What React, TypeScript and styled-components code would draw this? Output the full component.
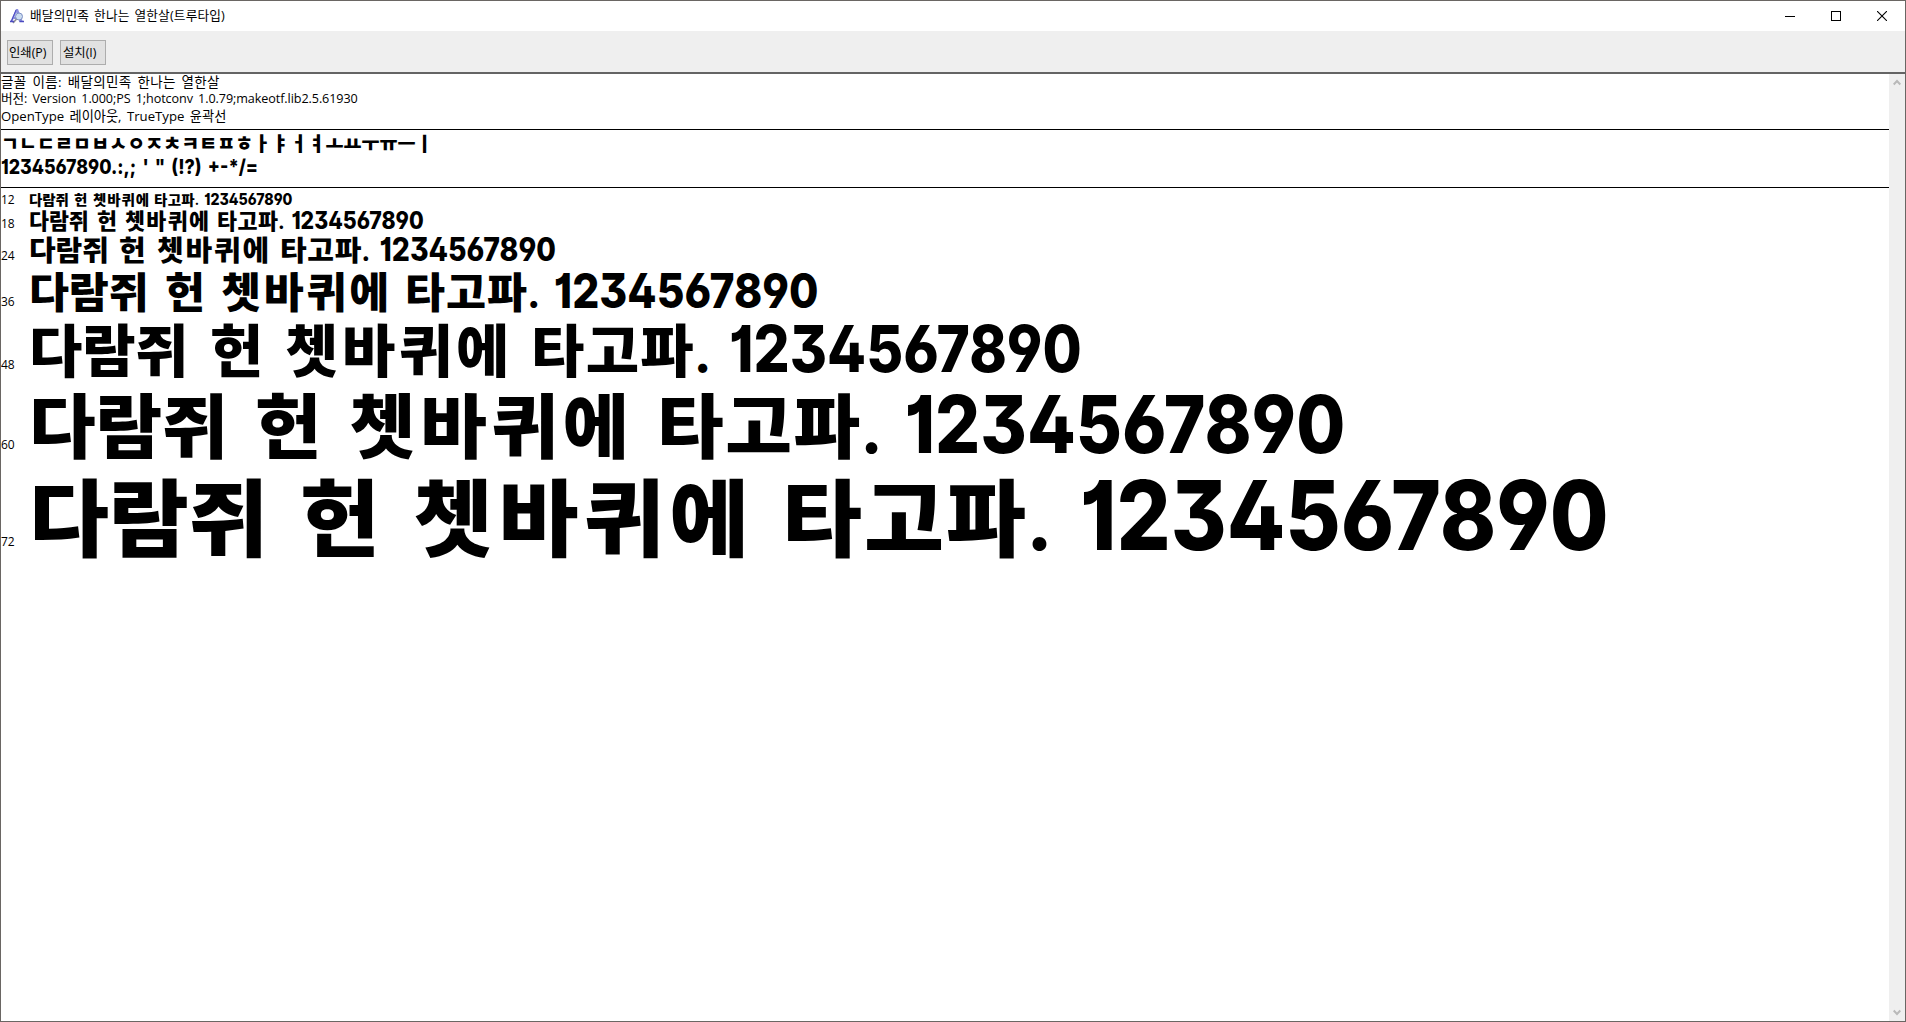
import styled, { createGlobalStyle } from 'styled-components';

const GlobalStyle = createGlobalStyle`
  body {
    margin: 0;
    background: #fff;
  }
  * {
    box-sizing: border-box;
  }
`
const Window = styled.div`
  display: flex;
  flex-direction: column;
  width: 100vw;
  height: 100vh;
  overflow: hidden;
  border: 1px solid #6a6663;
  background: #fff;
  color: #000;
  font-family: 'Open Sans', 'Noto Sans CJK KR', sans-serif;
  white-space: pre;
`
const TitleBar = styled.div`
  display: flex;
  align-items: center;
  height: 30px;
  padding-left: 8px;
`
const Title = styled.span`
  flex: 1;
  padding: 0 0 2px 5px;
  font-size: 12.7px;
  line-height: 26px;
  letter-spacing: 0.15px;
  word-spacing: 1.5px;
`
const WindowButton = styled.div`
  display: flex;
  justify-content: center;
  width: 46px;
  padding-right: 1px;
`
const Toolbar = styled.div`
  display: flex;
  gap: 7px;
  height: 43px;
  padding: 9px 6px 0;
  border-bottom: 2px solid #646464;
  background: #efefef;
`
const ToolButton = styled.button<{ $indent: number }>`
  width: 46px;
  height: 25px;
  padding: 0 0 0 ${p => p.$indent}px;
  border: 1px solid #adadad;
  background: #e1e1e1;
  color: #000;
  font-family: 'Open Sans', 'Noto Sans CJK KR', sans-serif;
  font-size: 12.3px;
  line-height: 23px;
  text-align: left;
  white-space: pre;
`
const Body = styled.div`
  display: flex;
  flex: 1;
  min-height: 0;
`
const Page = styled.div`
  flex: 1;
  overflow: hidden;
`
const Info = styled.div`
  height: 56px;
  border-bottom: 1px solid #000;
`
const InfoLine = styled.div<{ $size: number; $spacing: number }>`
  height: 17px;
  font-size: ${p => p.$size}px;
  line-height: 16px;
  letter-spacing: ${p => p.$spacing}px;
  word-spacing: 2px;
`
const Glyphs = styled.div`
  height: 58px;
  padding: 1px 0 0;
  border-bottom: 1px solid #000;
  font-family: 'Noto Sans CJK KR', sans-serif;
  font-weight: 900;
`
const Jamo = styled.div`
  font-size: 19.6px;
  line-height: 24px;
`
const numerals = `
  font-family: Inter, sans-serif;
  font-feature-settings: 'cv01', 'cv02', 'cv03', 'cv04', 'cv09';
  font-weight: 800;
  transform-origin: left;
`
const Symbols = styled.div`
  ${numerals}
  font-size: 20px;
  line-height: 24px;
  transform: scaleX(0.89);
  word-spacing: 2.5px;
`
const Samples = styled.div`
  display: flex;
  flex-direction: column;
`
const SampleRow = styled.div<{ $size: number; $gap: number }>`
  display: flex;
  align-items: baseline;
  height: ${p => p.$size}px;
  margin-top: ${p => p.$gap}px;
  font-family: 'Noto Sans CJK KR', sans-serif;
  font-size: ${p => p.$size}px;
  line-height: 1;
  font-weight: 900;
`
const SizeLabel = styled.span<{ $drop: number }>`
  align-self: flex-end;
  width: 28px;
  padding-bottom: ${p => p.$drop}px;
  font-family: 'Open Sans', sans-serif;
  font-size: 12px;
  line-height: 9px;
  font-weight: 400;
`
const Word = styled.span<{ $slot: number }>`
  flex: none;
  width: ${p => p.$slot}em;
`
const Hangul = styled.span<{ $spacing: number }>`
  display: inline-block;
  font-size: 0.88em;
  letter-spacing: ${p => p.$spacing}em;
  transform: scaleX(1.03);
  transform-origin: left;
`
const Period = styled.span`
  font-size: 0.75em;
`
const Digits = styled.span`
  ${numerals}
  padding-left: 0.02em;
  transform: scaleX(0.887);
`
const Scrollbar = styled.div`
  display: flex;
  flex-direction: column;
  justify-content: space-between;
  align-items: center;
  width: 16px;
  padding: 4px 0;
  background: #efefef;
`

const AppIcon = () => (
  <svg width="16" height="16" viewBox="0 0 16 16">
    <path d="M7 1 L9 1 L14 14 L10.5 14 L9.6 11 L4.5 11 L3 14 L1 14 Z" fill="#8d90dc" />
    <path d="M7.4 4.5 L9 9 L5.5 9 Z" fill="#fff" />
    <circle cx="10" cy="8.5" r="3.5" fill="#cbdcf0" stroke="#7c8fc4" />
    <path d="M7.5 11 L4 15" stroke="#8b8b93" strokeWidth="1.6" />
    <path d="M1 13.5 H5 M10.5 13.5 H15" stroke="#4a4ac0" strokeWidth="1.4" />
    <path d="M7 2 L2.5 13" stroke="#4848c4" />
  </svg>
)

const Chevron = ({ down }: { down?: boolean }) => (
  <svg width="8" height="8" viewBox="0 0 8 8">
    <path d={down ? 'M0.7 1.5 L4 5 L7.3 1.5' : 'M0.7 6.5 L4 3 L7.3 6.5'} fill="none" stroke="#b9b9b9" strokeWidth="2" />
  </svg>
)

const rows = [
  { pt: 12, gap: 2, drop: 2 },
  { pt: 18, gap: 0.5, drop: 3 },
  { pt: 24, gap: 0.5, drop: 3 },
  { pt: 36, gap: 0, drop: 5 },
  { pt: 48, gap: 1, drop: 7 },
  { pt: 60, gap: 2, drop: 9 },
  { pt: 72, gap: 3, drop: 11 },
]

const words = [
  { text: '다람쥐', slot: 2.823, spacing: -0.004 },
  { text: '헌', slot: 1.177, spacing: 0 },
  { text: '쳇바퀴에', slot: 3.844, spacing: 0.062 },
  { text: '타고파', slot: 3.083, spacing: 0.022, period: true },
]

const App = () => {
  return (
    <Window>
      <GlobalStyle />
      <TitleBar>
        <AppIcon />
        <Title>배달의민족 한나는 열한살(트루타입)</Title>
        <WindowButton>
          <svg width="10" height="10" shapeRendering="crispEdges"><path d="M0 5.5 H10" stroke="#000" /></svg>
        </WindowButton>
        <WindowButton>
          <svg width="10" height="10" shapeRendering="crispEdges"><rect x="0.5" y="0.5" width="9" height="9" fill="none" stroke="#000" /></svg>
        </WindowButton>
        <WindowButton>
          <svg width="10" height="10"><path d="M0 0 L10 10 M10 0 L0 10" stroke="#000" strokeWidth="1.1" /></svg>
        </WindowButton>
      </TitleBar>
      <Toolbar>
        <ToolButton $indent={1}>인쇄(P)</ToolButton>
        <ToolButton $indent={2}>설치(I)</ToolButton>
      </Toolbar>
      <Body>
        <Page>
          <Info>
            <InfoLine $size={13.5} $spacing={0.35}>글꼴 이름: 배달의민족 한나는 열한살</InfoLine>
            <InfoLine $size={12.6} $spacing={-0.08}>버전: Version 1.000;PS 1;hotconv 1.0.79;makeotf.lib2.5.61930</InfoLine>
            <InfoLine $size={13.2} $spacing={0}>OpenType 레이아웃, TrueType 윤곽선</InfoLine>
          </Info>
          <Glyphs>
            <Jamo>ㄱㄴㄷㄹㅁㅂㅅㅇㅈㅊㅋㅌㅍㅎㅏㅑㅓㅕㅗㅛㅜㅠㅡㅣ</Jamo>
            <Symbols>1234567890.:,; ' " (!?) +-*/=</Symbols>
          </Glyphs>
          <Samples>
            {rows.map(row => (
              <SampleRow key={row.pt} $size={row.pt * 4 / 3} $gap={row.gap}>
                <SizeLabel $drop={row.drop}>{row.pt}</SizeLabel>
                {words.map(word => (
                  <Word key={word.text} $slot={word.slot}>
                    <Hangul $spacing={word.spacing}>
                      {word.text}{word.period && <Period>.</Period>}
                    </Hangul>
                  </Word>
                ))}
                <Digits>1234567890</Digits>
              </SampleRow>
            ))}
          </Samples>
        </Page>
        <Scrollbar>
          <Chevron />
          <Chevron down />
        </Scrollbar>
      </Body>
    </Window>
  )
}

export default App
